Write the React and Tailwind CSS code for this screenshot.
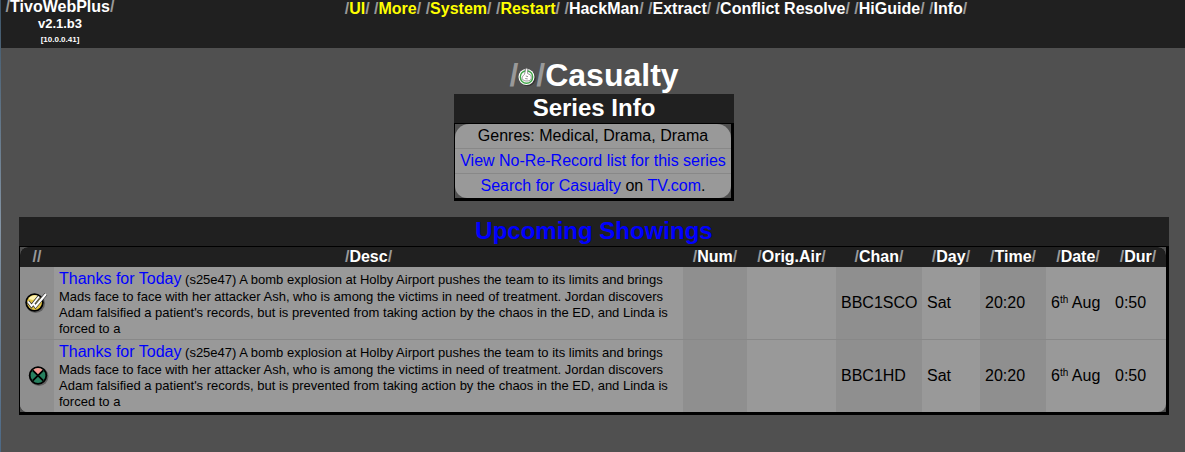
import React from "react";

const menuItems = [
  { label: "UI", submenu: true },
  { label: "More", submenu: true },
  { label: "System", submenu: true },
  { label: "Restart", submenu: true },
  { label: "HackMan" },
  { label: "Extract" },
  { label: "Conflict Resolve" },
  { label: "HiGuide" },
  { label: "Info" },
];

const columns = [
  { label: "", width: "w-[34px]" },
  { label: "Desc", width: "" },
  { label: "Num", width: "w-16" },
  { label: "Orig.Air", width: "w-[89px]" },
  { label: "Chan", width: "w-[86px]" },
  { label: "Day", width: "w-[58px]" },
  { label: "Time", width: "w-[66px]" },
  { label: "Date", width: "w-16" },
  { label: "Dur", width: "w-14" },
];

const description =
  "(s25e47) A bomb explosion at Holby Airport pushes the team to its limits and brings Mads face to face with her attacker Ash, who is among the victims in need of treatment. Jordan discovers Adam falsified a patient's records, but is prevented from taking action by the chaos in the ED, and Linda is forced to a";

const showings = [
  { id: 1, icon: "record", title: "Thanks for Today", chan: "BBC1SCO", day: "Sat", time: "20:20", dur: "0:50" },
  { id: 2, icon: "cancel", title: "Thanks for Today", chan: "BBC1HD", day: "Sat", time: "20:20", dur: "0:50" },
];

function Slashed({ children }) {
  return (
    <>
      <span className="text-[#999999]">/</span>
      {children}
      <span className="text-[#999999]">/</span>
    </>
  );
}

function ThumbIcon() {
  return (
    <svg viewBox="0 0 18 20" className="inline-block h-5 w-[18px] align-[-1px]" aria-hidden="true">
      <circle cx="9.8" cy="11.2" r="8" fill="#222222" opacity="0.6" />
      <circle cx="8.5" cy="10" r="8" fill="#ffffff" />
      <circle cx="8.5" cy="10" r="6.2" fill="#ffffff" stroke="#3fa648" strokeWidth="1.4" />
      <path
        d="M7.800 1.500c1-.8 2 0 1.900 1.200L9.600 6.500l3 1.500c.9.8.9 3.500.1 4.600-.8 1.200-3.200 1.600-5.200 1.300-1.800-.2-3.400-1.500-3.400-2.600 0-1.400.9-2.600 2.400-4z"
        fill="#ffffff"
        stroke="#6a6a6a"
        strokeWidth="0.7"
      />
      <path d="M7.800 9l2.200.6M7.200 11.500l2.500.4" stroke="#666666" strokeWidth="0.7" />
    </svg>
  );
}

function RecordIcon() {
  return (
    <svg viewBox="1 1 24 22" className="h-[22px] w-6" aria-hidden="true">
      <circle cx="11.5" cy="12.5" r="9.5" fill="#333333" opacity="0.5" />
      <circle cx="10.5" cy="11.5" r="9.2" fill="#000000" />
      <circle cx="10.5" cy="11.5" r="7.5" fill="#e3c545" />
      <path d="M4.5 8a7 7 0 0 1 10-2.500L9 9z" fill="#fff3b0" />
      <path
        d="M4 10.500l3.500 4.500L15 5.500M9 12l2.500 3.500L22 3"
        fill="none"
        stroke="#333333"
        strokeWidth="3.4"
      />
      <path
        d="M4 10.500l3.500 4.500L15 5.500M9 12l2.500 3.500L22 3"
        fill="none"
        stroke="#ffffff"
        strokeWidth="2"
      />
    </svg>
  );
}

function CancelIcon() {
  return (
    <svg viewBox="0 1 24 22" className="h-[22px] w-6" aria-hidden="true">
      <circle cx="14" cy="12.500" r="9.5" fill="#333333" opacity="0.5" />
      <circle cx="13" cy="11.500" r="9.2" fill="#000000" />
      <circle cx="13" cy="11.500" r="7.4" fill="#27805f" />
      <path d="M13 11.500L7.800 6.200a7.400 7.400 0 0 1 10.400 0z" fill="#f49a94" />
      <path d="M7.800 6.300l10.400 10.400M18.200 6.300L7.800 16.700" stroke="#000000" strokeWidth="1.8" />
    </svg>
  );
}

function Header() {
  return (
    <header className="flex h-12 bg-[#202020] font-bold text-white">
      <div className="w-[126px] shrink-0 pr-2 text-center">
        <a href="#home" className="block text-base leading-[14px]">
          <Slashed>TivoWebPlus</Slashed>
        </a>
        <p className="text-[13px] leading-5">v2.1.b3</p>
        <p className="text-[8px] leading-3">[10.0.0.41]</p>
      </div>
      <nav className="flex-1 text-center leading-[18px]">
        {menuItems.map((item) => (
          <React.Fragment key={item.label}>
            <a
              href={`#${item.label}`}
              className={`whitespace-nowrap ${item.submenu ? "text-[#ffff00]" : "text-white"}`}
            >
              <Slashed>{item.label}</Slashed>
            </a>{" "}
          </React.Fragment>
        ))}
      </nav>
    </header>
  );
}

function SeriesInfo() {
  return (
    <section className="mx-auto w-[280px]">
      <h2 className="bg-[#202020] pb-px text-center text-2xl leading-7 font-bold text-white">
        Series Info
      </h2>
      <div className="border-t border-r-3 border-b-3 border-l border-black bg-[#505050]">
        <ul className="divide-y divide-[#888888] overflow-hidden rounded-t-[14px] rounded-b-[12px] bg-[#999999] text-center leading-6">
          <li>Genres: Medical, Drama, Drama</li>
          <li>
            <a href="#no-re-record" className="text-[#0000ff]">
              View No-Re-Record list for this series
            </a>
          </li>
          <li>
            <a href="#search" className="text-[#0000ff]">Search for Casualty</a> on{" "}
            <a href="#tv" className="text-[#0000ff]">TV.com</a>.
          </li>
        </ul>
      </div>
    </section>
  );
}

function Upcoming() {
  return (
    <section className="mt-4">
      <h2 className="bg-[#202020] pb-px text-center text-2xl leading-7 font-bold">
        <a href="#upcoming" className="text-[#0000ff]">Upcoming Showings</a>
      </h2>
      <div className="border-t border-r-3 border-b-3 border-l border-black bg-[#505050]">
        <div className="overflow-hidden rounded-[8px]">
          <table className="w-full table-fixed border-separate border-spacing-0 bg-[#999999]">
            <thead>
              <tr className="bg-[#202020] leading-5 text-white">
                {columns.map((col) => (
                  <th key={col.label} className={`p-0 font-bold ${col.width}`}>
                    <Slashed>{col.label}</Slashed>
                  </th>
                ))}
              </tr>
            </thead>
            <tbody className="leading-[18px] [&_td]:px-[5px] [&_tr+tr>td]:border-t [&_tr+tr>td]:border-[#888888]">
              {showings.map((show) => (
                <tr key={show.id}>
                  <td className="bg-[#8f8f8f]">
                    {show.icon === "record" ? <RecordIcon /> : <CancelIcon />}
                  </td>
                  <td className="py-[2px] text-[13px] leading-4">
                    <a href="#episode" className="text-base leading-5 text-[#0000ff]">
                      {show.title}
                    </a>{" "}
                    {description}
                  </td>
                  <td className="bg-[#8f8f8f]"></td>
                  <td></td>
                  <td className="bg-[#8f8f8f]">{show.chan}</td>
                  <td>{show.day}</td>
                  <td className="bg-[#8f8f8f]">{show.time}</td>
                  <td className="whitespace-nowrap">
                    6<sup className="text-[10px] leading-3">th</sup> Aug
                  </td>
                  <td>{show.dur}</td>
                </tr>
              ))}
            </tbody>
          </table>
        </div>
      </div>
    </section>
  );
}

export default function App() {
  return (
    <div className="flex min-h-screen bg-[#505050] font-['Liberation_Sans',Arial,sans-serif] text-base text-black">
      <div className="w-px shrink-0 bg-linear-to-b from-[#3c5468] via-[#8494a4] to-[#4c6884]"></div>
      <div className="min-w-0 flex-1">
        <Header />
        <main className="pt-2 pr-4 pl-[18px]">
          <h1 className="text-center text-[32px] leading-[38px] font-bold text-white">
            <span className="text-[#999999]">/</span>
            <ThumbIcon />
            <span className="text-[#999999]">/</span>Casualty
          </h1>
          <SeriesInfo />
          <Upcoming />
        </main>
      </div>
    </div>
  );
}
